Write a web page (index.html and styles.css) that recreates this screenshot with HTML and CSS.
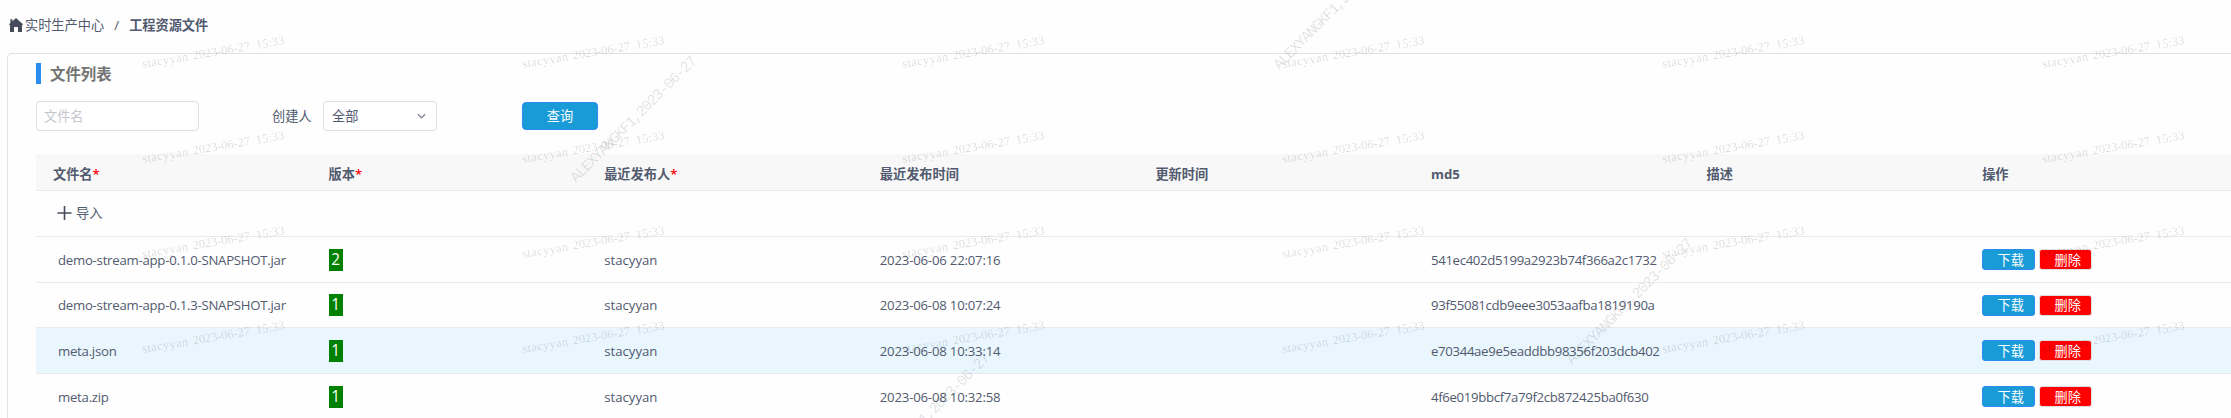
FILE: index.html
```
<!DOCTYPE html>
<html lang="zh-CN">
<head>
<meta charset="utf-8">
<title>工程资源文件</title>
<link rel="stylesheet" href="styles.css">
</head>
<body>
<nav class="crumbs">
  <svg class="home" viewBox="0 0 14 14"><path d="M7 0 14 6.2 13 7.2V14H9V9H5v5H1V7.2L0 6.2 1.4 5V1.2h2v2z"/></svg>
  <span>实时生产中心</span><span class="slash">/</span><b>工程资源文件</b>
</nav>
<main class="panel">
  <h1 class="title">文件列表</h1>
  <form class="filters">
    <input class="input" type="text" placeholder="文件名">
    <span class="label">创建人</span>
    <div class="select"><span>全部</span><svg class="arrow" viewBox="0 0 10 6"><path d="M1 1l4 4 4-4"/></svg></div>
    <button class="query" type="button">查询</button>
  </form>
  <section class="table">
    <div class="row head"><div>文件名<i>*</i></div><div>版本<i>*</i></div><div>最近发布人<i>*</i></div><div>最近发布时间</div><div>更新时间</div><div class="bold">md5</div><div>描述</div><div>操作</div></div>
    <div class="row import"><div class="name"><svg class="plus" viewBox="0 0 14 14"><path d="M7 0v14M0 7h14"/></svg>导入</div></div>
    <div class="row"><div class="name file">demo-stream-app-0.1.0-SNAPSHOT.jar</div><div><span class="ver">2</span></div><div class="user">stacyyan</div><div class="time">2023-06-06 22:07:16</div><div></div><div class="md5">541ec402d5199a2923b74f366a2c1732</div><div></div><div class="ops"><button class="btn">下载</button><button class="btn del">删除</button></div></div>
    <div class="row short"><div class="name file">demo-stream-app-0.1.3-SNAPSHOT.jar</div><div><span class="ver">1</span></div><div class="user">stacyyan</div><div class="time">2023-06-08 10:07:24</div><div></div><div class="md5">93f55081cdb9eee3053aafba1819190a</div><div></div><div class="ops"><button class="btn">下载</button><button class="btn del">删除</button></div></div>
    <div class="row hover"><div class="name file">meta.json</div><div><span class="ver">1</span></div><div class="user">stacyyan</div><div class="time">2023-06-08 10:33:14</div><div></div><div class="md5">e70344ae9e5eaddbb98356f203dcb402</div><div></div><div class="ops"><button class="btn">下载</button><button class="btn del">删除</button></div></div>
    <div class="row last"><div class="name file">meta.zip</div><div><span class="ver">1</span></div><div class="user">stacyyan</div><div class="time">2023-06-08 10:32:58</div><div></div><div class="md5">4f6e019bbcf7a79f2cb872425ba0f630</div><div></div><div class="ops"><button class="btn">下载</button><button class="btn del">删除</button></div></div>
  </section>
</main>
<svg class="marks" width="2231" height="418">
  <defs>
    <g id="stamp" class="stamp" transform="rotate(-9.5)"><text textLength="46">stacyyan</text><text x="51" textLength="58">2023-06-27</text><text x="115" textLength="29">15:33</text></g>
    <text id="alex" class="alex" textLength="172" transform="rotate(-45)">ALEXYANGKF1,2023-06-27</text>
    <g id="stamps"><use href="#stamp" y="68"/><use href="#stamp" y="163"/><use href="#stamp" y="258"/><use href="#stamp" y="353"/></g>
    <g id="diag"><use href="#alex" x="-303" y="-303"/><use href="#alex" x="-202" y="-202"/><use href="#alex" x="-101" y="-101"/><use href="#alex"/><use href="#alex" x="101" y="101"/><use href="#alex" x="202" y="202"/><use href="#alex" x="303" y="303"/><use href="#alex" x="404" y="404"/></g>
  </defs>
  <g class="stamp-layer"><use href="#stamps" x="143"/><use href="#stamps" x="523"/><use href="#stamps" x="903"/><use href="#stamps" x="1283"/><use href="#stamps" x="1663"/><use href="#stamps" x="2043"/></g>
  <g class="faint"><use href="#diag" x="-135" y="134"/><use href="#diag" x="288" y="114"/><use href="#diag" x="711" y="94"/><use href="#diag" x="1134" y="74"/><use href="#diag" x="1557" y="54"/><use href="#diag" x="1980" y="34"/></g>
  <g class="strong"><use href="#alex" x="576" y="183"/><use href="#alex" x="1279" y="70"/><use href="#alex" x="1572" y="365"/><use href="#alex" x="869" y="480"/></g>
</svg>
</body>
</html>
```
FILE: styles.css
```
* { box-sizing: border-box; }
html, body { height: 418px; overflow: hidden; }
body { margin: 0; background: #fefefe; color: #515a6e; font: 13.2px/20px "Open Sans", "Noto Sans CJK SC", sans-serif; }
.crumbs { display: flex; align-items: center; height: 53px; padding: 0 0 3px 9px; }
.home { width: 14px; height: 14px; margin-right: 2px; fill: #464c5b; }
.slash { margin: 0 10px; width: 5px; }
.crumbs b { font-weight: 600; }
.panel { height: 365px; margin-left: 7px; padding: 9px 0 0 28px; border: 1px solid #e1e2e3; border-width: 1px 0 0 1px; border-radius: 5px 0 0 0; }
.title { height: 21px; margin: 0; padding-left: 9px; border-left: 5px solid #2d8cf0; color: #737373; font-size: 15.4px; line-height: 23px; font-weight: 600; }
.filters { display: flex; align-items: center; height: 30px; margin-top: 17px; }
.input { width: 163px; height: 30px; padding: 0 7px; border: 1px solid #dcdee2; border-radius: 4px; background: #fff; font: inherit; }
.input::placeholder { color: #c5c8ce; }
.label { width: 51px; margin-left: 73px; }
.select { display: flex; align-items: center; justify-content: space-between; width: 114px; height: 30px; padding: 0 10px 0 8px; border: 1px solid #dcdee2; border-radius: 4px; background: #fff; }
.arrow { width: 9px; height: 6px; fill: none; stroke: #808695; stroke-width: 1.4; }
.query { width: 76px; height: 28px; margin-left: 85px; padding: 0; border: 1px solid #2d8cf0; border-radius: 4px; background: #189bd7; color: #fff; font: inherit; }
.table { margin-top: 23px; }
.row { display: grid; grid-template-columns: repeat(7, 275.6px) 1fr; align-items: center; height: 46px; padding: 0 0 0 17px; border-bottom: 1px solid #e8eaec; }
.row > div { white-space: nowrap; }
.short { height: 45px; }
.hover { background: #e9f6fe; }
.head { height: 37px; padding-top: 4px; background: #f8f8f9; font-weight: 600; }
.head i { color: #f00; font-style: normal; }
.head .bold { font-weight: 700; }
.import { padding-bottom: 1px; }
.last { height: 45px; border: 0; }
.row .name { padding-left: 5px; }
.file { letter-spacing: -.25px; }
.md5 { letter-spacing: -.33px; }
.time { letter-spacing: -.2px; }
.import .name { display: flex; align-items: center; padding-left: 4px; }
.plus { width: 15px; height: 14px; margin-right: 4px; stroke: #464c5b; stroke-width: 1.6; }
.ver { display: block; width: 14px; height: 22px; background: green; color: #fff; font-size: 15.4px; line-height: 22px; text-align: center; }
.ops { display: flex; align-items: center; gap: 4px; }
.btn { width: 53px; height: 21px; padding: 0 0 0 4px; border: 1px solid #2d8cf0; border-radius: 3px; background: #189bd7; color: #fff; font: inherit; line-height: 18px; }
.del { border-color: #dcdee2; background: #f00; }
.marks { position: absolute; left: 0; top: 0; pointer-events: none; }
.stamp { font: 12.5px "Liberation Serif", serif; }
.alex { font: 15px "Liberation Mono", monospace; }
.stamp-layer { fill: rgba(0, 0, 0, .15); }
.faint { fill: rgba(0, 0, 0, .018); }
.strong { fill: rgba(0, 0, 0, .12); }
```
